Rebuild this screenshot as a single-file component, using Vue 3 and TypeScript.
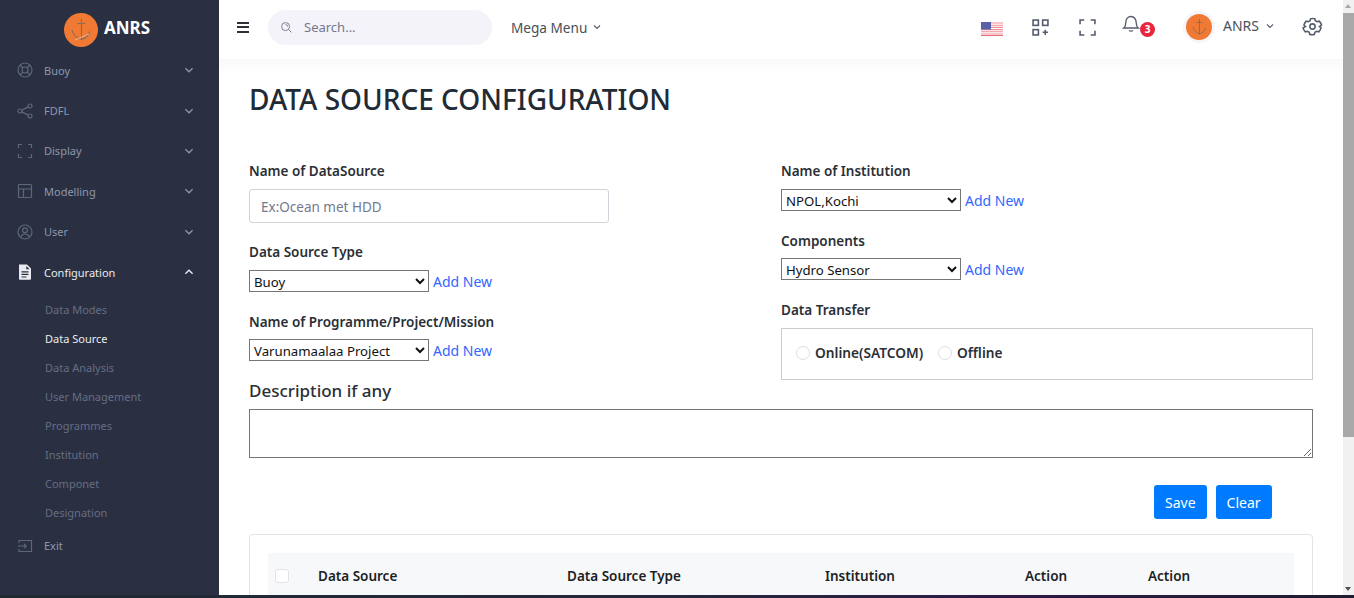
<template>
  <div class="screen">
    <div class="window">
      <!-- sidebar -->
      <aside class="sidebar">
        <div class="brand">
          <svg class="logo" viewBox="0 0 34 34">
            <circle cx="17" cy="17" r="17" fill="#f07a33" />
            <path d="M17.5 6v20M13.5 10.5h8M8 17c1 5 5 8 9.500 9.500 4-1 7-4 8-8" fill="none" stroke="#8d6a58" stroke-width="1.100" />
            <path d="M11 27l14-6" stroke="#e9c2a8" stroke-width="0.800" />
          </svg>
          <span class="brand-name">ANRS</span>
        </div>
        <nav class="menu">
          <div v-for="item in menuItems" :key="item.label" class="menu-item" :class="{ open: item.open }">
            <svg class="menu-icon" viewBox="0 0 16 16" v-html="item.icon"></svg>
            <span class="menu-label">{{ item.label }}</span>
            <svg class="menu-arrow" viewBox="0 0 10 10"><path :d="item.open ? 'M2 6.500l3-3 3 3' : 'M2 3.500l3 3 3-3'" /></svg>
          </div>
          <ul class="submenu">
            <li v-for="sub in subItems" :key="sub" :class="{ active: sub === 'Data Source' }">{{ sub }}</li>
          </ul>
          <div class="menu-item exit">
            <svg class="menu-icon" viewBox="0 0 16 16">
              <path d="M2 5V2.500h12.500v11H2V11M1 8h8M7 5.800 9.200 8 7 10.200" />
            </svg>
            <span class="menu-label">Exit</span>
          </div>
        </nav>
      </aside>

      <div class="right">
        <!-- top bar -->
        <header class="topbar">
          <div class="burger"><i></i><i></i><i></i></div>
          <div class="search">
            <svg viewBox="0 0 14 14"><circle cx="6" cy="6" r="4.300" /><path d="M9.300 9.300 12.300 12.300M6 3.800a2.200 2.200 0 0 1 2.200 2.200" /></svg>
            <span>Search...</span>
          </div>
          <div class="mega">Mega Menu
            <svg viewBox="0 0 10 10"><path d="M2 3.500l3 3 3-3" /></svg>
          </div>
          <div class="top-right">
            <svg class="flag" viewBox="0 0 22 14">
              <rect width="22" height="14" fill="#fff" />
              <path d="M0 1h22M0 3.200h22M0 5.400h22M0 7.600h22M0 9.800h22M0 12h22" stroke="#ef8f98" stroke-width="1.100" />
              <path d="M0 13.500h22" stroke="#e8707c" stroke-width="1" />
              <rect width="10" height="7.500" fill="#5a60a8" />
            </svg>
            <svg class="top-icon apps" viewBox="0 0 16 16">
              <rect x="1" y="1" width="5" height="5" /><rect x="10" y="1" width="5" height="5" /><rect x="1" y="10" width="5" height="5" />
              <path d="M12.500 10v5M10 12.500h5" />
            </svg>
            <svg class="top-icon full" viewBox="0 0 16 16">
              <path d="M1 5V1h4M11 1h4v4M15 11v4h-4M5 15H1v-4" />
            </svg>
            <div class="bell">
              <svg class="top-icon" viewBox="0 0 16 17">
                <path d="M1.500 12.500c1.200-1 1.800-2 1.800-4.500 0-3.400 2-5.800 4.700-5.800s4.700 2.400 4.700 5.800c0 2.500.6 3.500 1.800 4.500zM6.300 14.700c.8.900 2.600.9 3.400 0" />
              </svg>
              <span class="badge">3</span>
            </div>
            <div class="user">
              <span class="avatar">
                <svg viewBox="0 0 26 26">
                  <circle cx="13" cy="13" r="13" fill="#f07a33" />
                  <path d="M13.500 5v15M10.500 8.500h6M7 13c1 3.500 3.500 6 6.500 7 3-.8 5-3 6-6" fill="none" stroke="#8d6a58" stroke-width="0.900" />
                </svg>
              </span>
              <span class="user-name">ANRS</span>
              <svg class="user-arrow" viewBox="0 0 10 10"><path d="M2 3.500l3 3 3-3" /></svg>
            </div>
            <svg class="top-icon gear" viewBox="0 0 24 24">
              <circle cx="12" cy="12" r="3" />
              <path d="M12 2.500c1 0 1.800.2 2.600.5l.6 2.400 2.100 1.200 2.400-.7a9.500 9.500 0 0 1 2.600 4.500L20 12l1.800 1.600a9.500 9.500 0 0 1-2.600 4.500l-2.400-.7-2.100 1.200-.6 2.400a9.500 9.500 0 0 1-5.200 0l-.6-2.400-2.100-1.200-2.400.7a9.500 9.500 0 0 1-2.600-4.500L4 12l-1.800-1.600a9.500 9.500 0 0 1 2.600-4.500l2.400.7 2.100-1.200.6-2.400c.8-.3 1.600-.5 2.700-.5z" />
            </svg>
          </div>
        </header>

        <!-- page -->
        <main class="page">
          <h1>DATA SOURCE CONFIGURATION</h1>
          <div class="form-grid">
            <div class="col">
              <label class="field-label first">Name of DataSource</label>
              <input class="text-input" type="text" placeholder="Ex:Ocean met HDD" />
              <label class="field-label type">Data Source Type</label>
              <div class="select-row">
                <select><option>Buoy</option></select>
                <a>Add New</a>
              </div>
              <label class="field-label next">Name of Programme/Project/Mission</label>
              <div class="select-row">
                <select><option>Varunamaalaa Project</option></select>
                <a>Add New</a>
              </div>
            </div>
            <div class="col">
              <label class="field-label first">Name of Institution</label>
              <div class="select-row">
                <select><option>NPOL,Kochi</option></select>
                <a>Add New</a>
              </div>
              <label class="field-label next">Components</label>
              <div class="select-row">
                <select><option>Hydro Sensor</option></select>
                <a>Add New</a>
              </div>
              <label class="field-label next transfer">Data Transfer</label>
              <div class="radio-box">
                <span class="radio"></span><span class="radio-label">Online(SATCOM)</span>
                <span class="radio"></span><span class="radio-label">Offline</span>
              </div>
            </div>
          </div>
          <h2>Description if any</h2>
          <textarea class="desc"></textarea>
          <div class="buttons">
            <button>Save</button>
            <button>Clear</button>
          </div>
          <section class="card">
            <div class="thead">
              <span class="check"></span>
              <span>Data Source</span>
              <span>Data Source Type</span>
              <span>Institution</span>
              <span>Action</span>
              <span>Action</span>
            </div>
          </section>
        </main>
      </div>

      <!-- browser scrollbar -->
      <div class="scrollbar">
        <span class="arrow up"></span>
        <span class="thumb"></span>
        <span class="arrow down"></span>
      </div>
    </div>
    <div class="taskbar"></div>
  </div>
</template>

<script setup lang="ts">
const menuItems = [
  {
    label: "Buoy",
    icon: '<circle cx="8" cy="8" r="7"/><circle cx="8" cy="8" r="3"/><path d="M3 3l3 3M13 3l-3 3M3 13l3-3M13 13l-3-3"/>',
  },
  {
    label: "FDFL",
    icon: '<circle cx="3" cy="8" r="2"/><circle cx="13" cy="3" r="2"/><circle cx="13" cy="13" r="2"/><path d="M4.800 7.100l6.400-3.200M4.800 8.900l6.400 3.200"/>',
  },
  {
    label: "Display",
    icon: '<path d="M1.500 5V1.500H5M11 1.500h3.500V5M14.500 11v3.500H11M5 14.500H1.500V11"/>',
  },
  {
    label: "Modelling",
    icon: '<rect x="1.500" y="1.500" width="13" height="13" rx="1"/><path d="M1.500 6h13M6.500 6v8.500"/>',
  },
  {
    label: "User",
    icon: '<circle cx="8" cy="8" r="7"/><circle cx="8" cy="6.300" r="2.400"/><path d="M3.600 13c.8-2 2.500-3 4.400-3s3.600 1 4.400 3"/>',
  },
  {
    label: "Configuration",
    open: true,
    icon: '<path fill="#e9ebf0" stroke="none" fill-rule="evenodd" d="M2 .5h8l4 4V15a.8.8 0 0 1-.8.8H2.800A.8.8 0 0 1 2 15zM9.300 2v3.300h3.200zM4.500 7.200v1.200h7V7.200zM4.500 9.800V11h7V9.800zM4.500 12.400v1.200h5v-1.200z"/>',
  },
];

const subItems = ["Data Modes", "Data Source", "Data Analysis", "User Management", "Programmes", "Institution", "Componet", "Designation"];
</script>

<style>
html,
body {
  margin: 0;
  overflow: hidden;
  background: #fff;
}
</style>

<style scoped>
.screen {
  width: 1354px;
  height: 598px;
  display: flex;
  flex-direction: column;
  font-family: "Noto Sans", "Open Sans", sans-serif;
  color: #212529;
}

.window {
  flex: 1;
  min-height: 0;
  display: flex;
}

.taskbar {
  height: 3px;
  background: linear-gradient(90deg, #1f2a30 0%, #24283c 50%, #2c1a45 75%, #1e1c30 100%);
}

.sidebar {
  width: 219px;
  flex-shrink: 0;
  background: #2a3042;
  overflow: hidden;
}

.brand {
  height: 50px;
  padding: 13px 0 0 64px;
  box-sizing: border-box;
  display: flex;
  gap: 6px;
  align-items: flex-start;
}

.logo {
  width: 34px;
  height: 34px;
}

.brand-name {
  color: #fff;
  font-size: 17px;
  font-weight: 700;
  line-height: 30px;
}

.menu {
  font-size: 11px;
}

.menu-item {
  height: 40.4px;
  padding-left: 17px;
  display: flex;
  align-items: center;
  color: #8f96ab;
}

.menu-icon {
  width: 16px;
  height: 16px;
  fill: none;
  stroke: #5f6679;
  stroke-width: 1.200;
  margin-right: 11px;
}

.menu-label {
  flex: 1;
}

.menu-arrow {
  width: 12px;
  height: 12px;
  margin-right: 24px;
  fill: none;
  stroke: #8f96ab;
  stroke-width: 1.100;
}

.menu-item.open {
  color: #e9ebf0;
}

.menu-item.open .menu-arrow {
  stroke: #e9ebf0;
}

.submenu {
  list-style: none;
  margin: 3px 0 0;
  padding: 0 0 0 45px;
}

.submenu li {
  height: 29px;
  line-height: 29px;
  color: #666d82;
}

.submenu li.active {
  color: #e9ebf0;
}

.exit {
  height: 37px;
}

.right {
  flex: 1;
  min-width: 0;
  display: flex;
  flex-direction: column;
}

.topbar {
  height: 59px;
  flex-shrink: 0;
  box-sizing: border-box;
  padding: 0 0 5px 18px;
  display: flex;
  align-items: center;
  background: #fff;
}

.burger {
  width: 12px;
  margin-right: 19px;
  display: flex;
  flex-direction: column;
  gap: 2.500px;
}

.burger i {
  height: 2px;
  background: #2d3036;
}

.search {
  width: 224px;
  height: 35px;
  border-radius: 18px;
  background: #f3f3f9;
  display: flex;
  align-items: center;
  padding-left: 12px;
  box-sizing: border-box;
  font-size: 13px;
  color: #74788d;
}

.search svg {
  width: 13px;
  height: 13px;
  margin-right: 11px;
  fill: none;
  stroke: #74788d;
}

.mega {
  margin-left: 19px;
  font-size: 13.600px;
  color: #495057;
  display: flex;
  align-items: center;
  gap: 5px;
}

.mega svg,
.user-arrow {
  width: 10px;
  height: 10px;
  fill: none;
  stroke: #555b6d;
  stroke-width: 1.100;
}

.top-right {
  margin-left: auto;
  display: flex;
  align-items: center;
}

.flag {
  width: 22px;
  height: 14px;
  margin-right: 29px;
  margin-top: 4px;
}

.top-icon {
  width: 17px;
  height: 17px;
  fill: none;
  stroke: #555b6d;
  stroke-width: 1.500;
}

.full {
  margin-left: 30px;
}

.bell {
  display: flex;
  align-items: flex-start;
  margin-left: 26px;
  position: relative;
  width: 36px;
  height: 20px;
}

.bell .top-icon {
  width: 18px;
  height: 19px;
  stroke-width: 1.200;
  margin-top: -3px;
}

.badge {
  position: absolute;
  left: 18px;
  top: 5px;
  width: 15px;
  height: 15px;
  border-radius: 50%;
  background: #e6283f;
  color: #fff;
  font-size: 10px;
  font-weight: 700;
  line-height: 15px;
  text-align: center;
}

.user {
  display: flex;
  align-items: center;
  margin-left: 25px;
}

.avatar {
  width: 32px;
  height: 32px;
  border-radius: 50%;
  background: #f6f6fa;
  display: flex;
  align-items: center;
  justify-content: center;
}

.avatar svg {
  width: 26px;
  height: 26px;
}

.user-name {
  margin-left: 8px;
  margin-right: 6px;
  margin-bottom: 3px;
  font-size: 14px;
  color: #495057;
}

.user-arrow {
  margin-bottom: 2px;
}

.gear {
  width: 21px;
  height: 21px;
  margin-left: 27px;
  margin-right: 20px;
  margin-bottom: 2px;
  stroke-width: 1.800;
}

.page {
  flex: 1;
  min-height: 0;
  overflow: hidden;
  padding: 0 30px;
  background: linear-gradient(180deg, #f9f9f9 0, #fff 16px);
}

h1 {
  margin: 21px 0 0;
  font-size: 28px;
  font-weight: 500;
  line-height: 38px;
  color: #212b36;
}

.form-grid {
  display: grid;
  grid-template-columns: 1fr 1fr;
  margin-top: 43px;
}

.field-label {
  display: block;
  font-size: 13.500px;
  font-weight: 600;
  line-height: 20px;
  color: #2b2f36;
}

.field-label.first {
  margin-bottom: 8px;
}

.field-label.type {
  margin-top: 19px;
  margin-bottom: 8px;
}

.field-label.next {
  margin-top: 20px;
  margin-bottom: 7px;
}

.field-label.transfer {
  margin-bottom: 8px;
}

.text-input {
  display: block;
  width: 360px;
  height: 34px;
  box-sizing: border-box;
  padding: 1px 11px 0;
  border: 1px solid #ced4da;
  border-radius: 3px;
  font: 13.500px "Noto Sans", sans-serif;
  color: #495057;
}

.text-input::placeholder {
  color: #74788d;
}

.select-row {
  display: flex;
  align-items: center;
  gap: 4px;
  height: 22px;
}

select {
  width: 180px;
  height: 22px;
  padding: 1px 0 0;
  font: 13.200px "Noto Sans", sans-serif;
  color: #111;
  background: #fff;
  border: 1px solid #767676;
  border-radius: 0;
}

.select-row a {
  font-size: 14px;
  color: #3366ff;
}

.radio-box {
  height: 52px;
  box-sizing: border-box;
  border: 1px solid #ccc;
  display: flex;
  align-items: center;
  padding: 0 0 3px 14px;
}

.radio {
  width: 14px;
  height: 14px;
  box-sizing: border-box;
  border: 1px solid #dcdfe4;
  border-radius: 50%;
  margin-right: 5px;
}

.radio-label {
  font-size: 13.700px;
  font-weight: 600;
  color: #2b2f36;
  margin-right: 15px;
}

h2 {
  margin: 0;
  font-size: 17px;
  font-weight: 500;
  line-height: 22px;
  color: #2b2f36;
}

.desc {
  display: block;
  width: 100%;
  height: 49px;
  box-sizing: border-box;
  margin-top: 7px;
  border: 1px solid #767676;
  border-radius: 0;
}

.buttons {
  display: flex;
  gap: 9px;
  margin-top: 27px;
  padding-left: 905px;
}

.buttons button {
  height: 34px;
  padding: 0 11px;
  border: none;
  border-radius: 3px;
  background: #007bff;
  color: #fff;
  font: 14px "Noto Sans", sans-serif;
}

.card {
  margin-top: 15px;
  height: 100px;
  padding: 18px;
  box-sizing: border-box;
  border: 1px solid #e3e3e3;
  border-radius: 4px;
}

.thead {
  height: 46px;
  background: #f7f8fa;
  display: grid;
  grid-template-columns: 50px 249px 258px 200px 123px 1fr;
  align-items: center;
  font-size: 13.500px;
  font-weight: 600;
  color: #1c1f24;
}

.check {
  width: 14px;
  height: 14px;
  box-sizing: border-box;
  margin-left: 7px;
  border: 1px solid #dfe3e8;
  border-radius: 3px;
  background: #fff;
}

.scrollbar {
  width: 11px;
  flex-shrink: 0;
  background: #f1f1f1;
  display: flex;
  flex-direction: column;
  align-items: stretch;
}

.thumb {
  height: 424px;
  background: #a8a8a8;
  margin-top: 1px;
}

.arrow {
  height: 12px;
  display: block;
  position: relative;
}

.arrow::after {
  content: "";
  position: absolute;
  left: 2px;
  top: 4px;
  border-left: 3.500px solid transparent;
  border-right: 3.500px solid transparent;
}

.arrow.up::after {
  border-bottom: 4px solid #a8a8a8;
}

.arrow.down {
  margin-top: auto;
}

.arrow.down::after {
  border-top: 4px solid #505050;
}
</style>
